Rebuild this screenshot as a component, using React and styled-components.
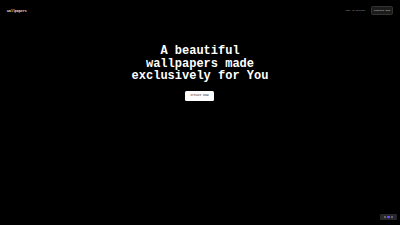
import React from "react";
import styled, { createGlobalStyle } from "styled-components";

const Global = createGlobalStyle`
  html, body { margin: 0; padding: 0; background: #000; }
  body { font-family: "Liberation Mono", "DejaVu Sans Mono", monospace; color: #fff; }
  * { box-sizing: border-box; }
`;

const Page = styled.div`
  width: 400px;
  height: 225px;
  background: #000;
  display: flex;
  flex-direction: column;
  position: relative;
  overflow: hidden;
`;

const Header = styled.header`
  display: flex;
  align-items: center;
  justify-content: space-between;
  padding: 6px 7px 0 7px;
  height: 15px;
`;

const Logo = styled.div`
  font-size: 3.2px;
  font-weight: 700;
  color: #e8e8e8;
  letter-spacing: 0.05px;
`;

const Nav = styled.nav`
  display: flex;
  align-items: center;
  gap: 6px;
`;

const NavLink = styled.span`
  font-size: 2.5px;
  color: #a8a8a8;
`;

const NavButton = styled.span`
  display: inline-flex;
  align-items: center;
  justify-content: center;
  width: 22px;
  height: 9px;
  border-radius: 1.5px;
  background: #1c1c1c;
  border: 0.5px solid #333;
  font-size: 2.5px;
  color: #d0d0d0;
`;

const Hero = styled.main`
  display: flex;
  flex-direction: column;
  align-items: center;
  padding-top: 30px;
`;

const Title = styled.h1`
  margin: 0;
  font-size: 12px;
  line-height: 12.5px;
  font-weight: 700;
  text-align: center;
  color: #fff;
`;

const Cta = styled.button`
  margin-top: 8px;
  margin-right: 1px;
  width: 29px;
  height: 10px;
  border: none;
  border-radius: 1.5px;
  background: #fff;
  color: #222;
  font-family: inherit;
  font-size: 3px;
  padding: 0;
  display: flex;
  align-items: center;
  justify-content: center;
`;

const Badge = styled.div`
  position: absolute;
  right: 3px;
  bottom: 5px;
  width: 17px;
  height: 6px;
  border-radius: 1px;
  background: #26262b;
  display: flex;
  align-items: center;
  justify-content: center;
  gap: 1px;
`;

const BadgeDot = styled.span`
  width: ${(p) => p.w}px;
  height: 2.5px;
  border-radius: 0.5px;
  background: ${(p) => p.c};
`;

export default function App() {
  return (
    <Page>
      <Global />
      <Header>
        <Logo>wallpapers</Logo>
        <Nav>
          <NavLink>How it works?</NavLink>
          <NavButton>Contact Now</NavButton>
        </Nav>
      </Header>
      <Hero>
        <Title>
          A beautiful
          <br />
          wallpapers made
          <br />
          exclusively for You
        </Title>
        <Cta>Create Now</Cta>
      </Hero>
      <Badge>
        <BadgeDot w={2} c="#6b6b78" />
        <BadgeDot w={3} c="#6d4cff" />
        <BadgeDot w={2} c="#6b6b78" />
      </Badge>
    </Page>
  );
}
